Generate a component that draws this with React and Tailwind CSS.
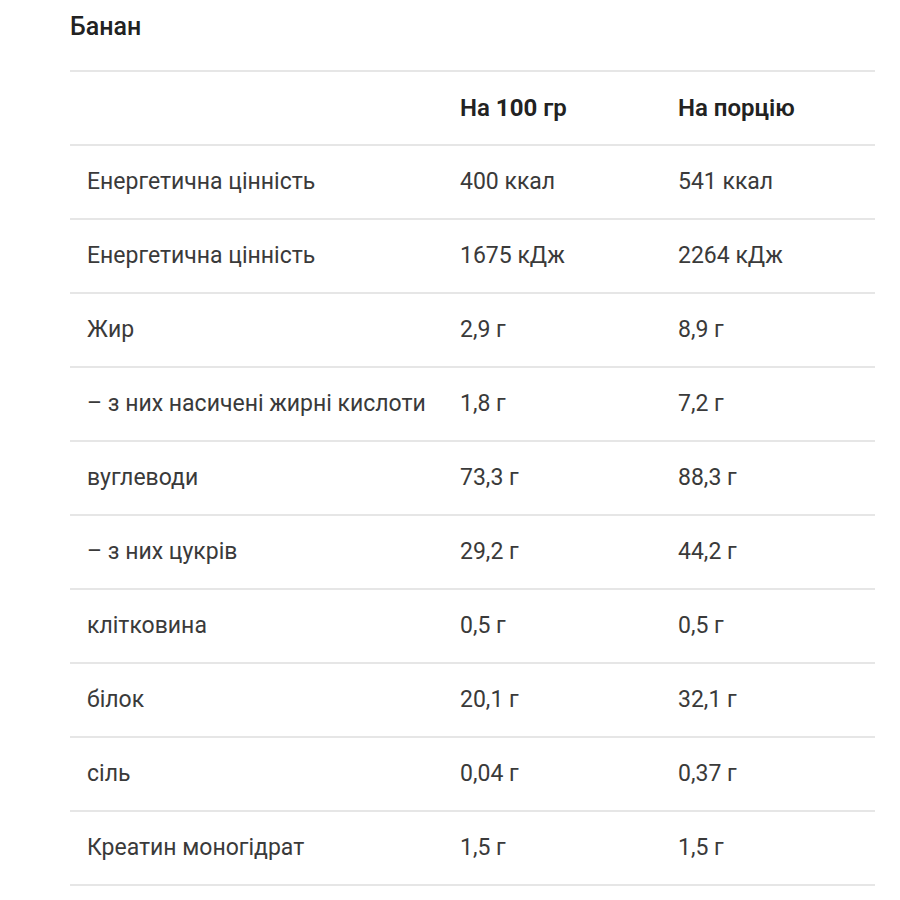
import React from "react";

const rows = [
  ["Енергетична цінність", "400 ккал", "541 ккал"],
  ["Енергетична цінність", "1675 кДж", "2264 кДж"],
  ["Жир", "2,9 г", "8,9 г"],
  ["– з них насичені жирні кислоти", "1,8 г", "7,2 г"],
  ["вуглеводи", "73,3 г", "88,3 г"],
  ["– з них цукрів", "29,2 г", "44,2 г"],
  ["клітковина", "0,5 г", "0,5 г"],
  ["білок", "20,1 г", "32,1 г"],
  ["сіль", "0,04 г", "0,37 г"],
  ["Креатин моногідрат", "1,5 г", "1,5 г"],
];

export default function App() {
  return (
    <div className="min-h-[900px] bg-white px-[70px] pt-[12px] font-['Roboto',sans-serif] text-[#3a3a3a]">
      <h2 className="h-[58px] text-[25px] font-medium leading-[30px] text-[#222]">Банан</h2>
      <table className="w-[805px] border-collapse text-[23px]">
        <thead>
          <tr className="h-[74px] border-y-2 border-[#e6e6e6]">
            <th className="w-[373px] px-[17px] text-left"></th>
            <th className="w-[218px] px-[17px] text-left text-[24px] font-semibold text-[#222]">
              На <span className="font-bold">100</span> гр
            </th>
            <th className="px-[17px] text-left text-[24px] font-semibold text-[#222]">На порцію</th>
          </tr>
        </thead>
        <tbody>
          {rows.map((r, i) => (
            <tr key={i} className="h-[74px] border-b-2 border-[#e6e6e6]">
              <td className="px-[17px]">{r[0]}</td>
              <td className="px-[17px]">{r[1]}</td>
              <td className="px-[17px]">{r[2]}</td>
            </tr>
          ))}
        </tbody>
      </table>
    </div>
  );
}
